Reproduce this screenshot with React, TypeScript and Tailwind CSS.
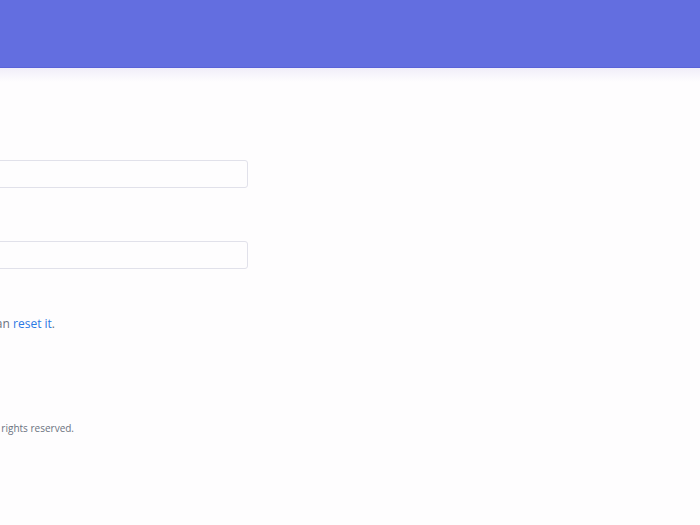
import React from "react";

export default function App() {
  return (
    <div
      className="min-h-[525px] w-full overflow-hidden bg-[#fefdfe]"
      style={{ fontFamily: '"Open Sans", "Liberation Sans", sans-serif' }}
    >
      <header className="h-[68px] w-full border-b border-[#5a63d9] bg-[#636ee0]" />
      <div className="h-[14px] w-full bg-gradient-to-b from-[#f1eef9] to-[#fefdfe]" />
      <main className="ml-[-252px] w-[500px]">
        <form className="flex flex-col">
          <label className="mt-[58px] text-[13px] text-[#4b5563]">Email</label>
          <input
            type="email"
            className="h-[28px] w-full rounded-[3px] border border-[#e1e1ea] bg-[#fefdfe] outline-none"
          />
          <label className="mt-[34px] text-[13px] text-[#4b5563]">Password</label>
          <input
            type="password"
            className="h-[28px] w-full rounded-[3px] border border-[#e1e1ea] bg-[#fefdfe] outline-none"
          />
          <div className="mt-[46px] flex w-[307px] justify-end">
            <p className="whitespace-nowrap text-[12px] leading-[18px] text-[#6b7280]">
              Forgot your password? You can{" "}
              <a href="#" className="text-[#2b78e4]">
                reset it
              </a>
              .
            </p>
          </div>
        </form>
        <footer className="mt-[88px] flex w-[326px] justify-end">
          <span className="whitespace-nowrap text-[10px] leading-[14px] text-[#6b7280]">
            © 2024 Company. All rights reserved.
          </span>
        </footer>
      </main>
    </div>
  );
}
